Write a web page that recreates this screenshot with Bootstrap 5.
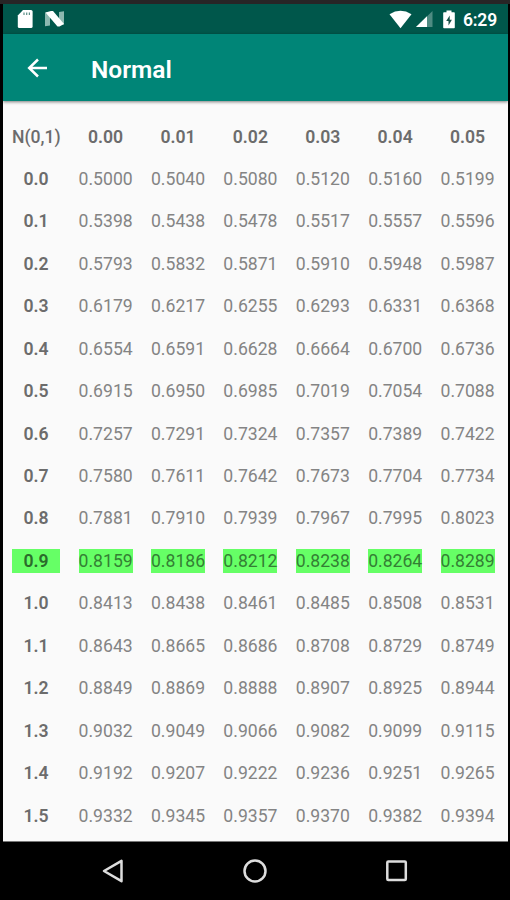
<!DOCTYPE html>
<html lang="en">
<head>
<meta charset="utf-8">
<meta name="viewport" content="width=device-width, initial-scale=1">
<title>Normal</title>
<link href="https://cdn.jsdelivr.net/npm/bootstrap@5.3.0/dist/css/bootstrap.min.css" rel="stylesheet">
<style>
html, body { height: 900px; overflow: hidden; }
body { background: #000; font-family: Roboto, "Liberation Sans", sans-serif; }
.device { width: 510px; height: 900px; border-top: 4px solid #272526; padding: 0 2px 0 3px; background: #000; }
.status-bar { height: 30px; background: #00574b; color: #fff; padding: 0 10px 0 14px; }
.clock { font-size: 17.5px; font-weight: 600; line-height: 30px; width: 35px; letter-spacing: -.2px; padding-top: 1px; }
.app-bar { height: 67px; background: #008577; color: #fff; position: relative; box-shadow: 0 1px 3px rgba(0,0,0,.5); padding-left: 21px; }
.app-title { font-size: 24.5px; font-weight: 600; line-height: 30px; margin: 4px 0 0 41px; }
.sheet { height: 741px; background: #fafafa; padding: 14.3px 0 0 9px; border-bottom: 1px solid #777; }
.z-row { height: 42.44px; color: #848484; font-size: 17.6px; line-height: 24px; }
.z-cell { width: 54px; height: 24px; margin-left: 18.4px; text-align: center; white-space: nowrap; }
.z-label { width: 48px; margin: 0 .2px 0 0; }
.z-head, .z-label { font-weight: 600; color: #6c6c6c; }
.z-head.z-label { font-weight: 500; }
.z-hit .z-cell { background: #66ff66; color: #347f34; }
.z-hit .z-label { color: #2b6c2b; }
.nav-keys { height: 58px; background: #000; padding-left: 98px; gap: 117px; }
.battery { margin: 0 8px 0 10px; }
svg { display: block; flex: none; }
</style>
</head>
<body>
<div class="device">
  <div class="status-bar d-flex align-items-center">
    <svg width="16" height="20" viewBox="0 0 16 20"><path d="M6 1h8a1.6 1.6 0 0 1 1.6 1.6v14.8A1.6 1.6 0 0 1 14 19H2.400A1.6 1.6 0 0 1 .8 17.400V6.500z" fill="#fff"/><path d="M7 3.500v2.500M9.700 3.500v2.500M12.400 3.500v2.500" stroke="#5b8f87" stroke-width="1.200"/></svg>
    <svg class="ms-2 me-auto" width="28" height="18" viewBox="0 0 28 18"><path d="M4 2.500h5v13l-5 .8zM18 2l5-.8V14.500h-5z" fill="#8cb8b0"/><path d="M4.500 2.500l5.500-1.500h2l11 13-4.500 2.600h-2z" fill="#fff"/></svg>
    <svg width="23" height="19" viewBox="0 0 23 19"><path d="M.5 4.200Q11.500-2.600 22.500 4.200L11.500 18.300z" fill="#fff"/></svg>
    <svg class="ms-1" style="margin-left:2px" width="17" height="18" viewBox="0 0 17 18"><path d="M16.500 1v16H0z" fill="#4e8b82"/><path d="M11 6.300V17H0z" fill="#fff"/></svg>
    <svg class="battery" width="12" height="19" viewBox="0 0 12 19"><path d="M3.500.5h5v1.700H11a.8.8 0 0 1 .8.8v14.500a.8.8 0 0 1-.8.8H1a.8.8 0 0 1-.8-.8V3a.8.8 0 0 1 .8-.8h2.500z" fill="#fff"/><path d="M6.700 5.500L3.200 11h2.300v4.500L8.900 9.700H6.700z" fill="#174f46"/></svg>
    <span class="clock">6:29</span>
  </div>
  <div class="app-bar d-flex align-items-center">
    <svg width="26" height="26" viewBox="0 0 26 26"><path d="M23 13H5.500M14 4.500L5.200 13l8.800 8.500" fill="none" stroke="#fff" stroke-width="2.500"/></svg>
    <h1 class="app-title">Normal</h1>
  </div>
  <main class="sheet"></main>
  <div class="nav-keys d-flex align-items-center">
    <svg width="24" height="26" viewBox="0 0 24 26"><path d="M20.500 2.800v20.400L3 13z" fill="none" stroke="#ddd" stroke-width="2.500" stroke-linejoin="round"/></svg>
    <svg width="26" height="26" viewBox="0 0 26 26"><circle cx="13" cy="13" r="10.500" fill="none" stroke="#ddd" stroke-width="2.500"/></svg>
    <svg width="24" height="26" viewBox="0 0 24 26"><rect x="2.300" y="3.500" width="18.500" height="18.500" rx="1" fill="none" stroke="#ddd" stroke-width="2.500"/></svg>
  </div>
</div>
<script src="https://cdn.jsdelivr.net/npm/bootstrap@5.3.0/dist/js/bootstrap.bundle.min.js"></script>
<script>
const rows = `N(0,1) 0.00 0.01 0.02 0.03 0.04 0.05
0.0 0.5000 0.5040 0.5080 0.5120 0.5160 0.5199
0.1 0.5398 0.5438 0.5478 0.5517 0.5557 0.5596
0.2 0.5793 0.5832 0.5871 0.5910 0.5948 0.5987
0.3 0.6179 0.6217 0.6255 0.6293 0.6331 0.6368
0.4 0.6554 0.6591 0.6628 0.6664 0.6700 0.6736
0.5 0.6915 0.6950 0.6985 0.7019 0.7054 0.7088
0.6 0.7257 0.7291 0.7324 0.7357 0.7389 0.7422
0.7 0.7580 0.7611 0.7642 0.7673 0.7704 0.7734
0.8 0.7881 0.7910 0.7939 0.7967 0.7995 0.8023
0.9 0.8159 0.8186 0.8212 0.8238 0.8264 0.8289
1.0 0.8413 0.8438 0.8461 0.8485 0.8508 0.8531
1.1 0.8643 0.8665 0.8686 0.8708 0.8729 0.8749
1.2 0.8849 0.8869 0.8888 0.8907 0.8925 0.8944
1.3 0.9032 0.9049 0.9066 0.9082 0.9099 0.9115
1.4 0.9192 0.9207 0.9222 0.9236 0.9251 0.9265
1.5 0.9332 0.9345 0.9357 0.9370 0.9382 0.9394`.split('\n');
document.querySelector('.sheet').innerHTML = rows.map((line, r) =>
  `<div class="z-row d-flex align-items-center${r === 10 ? ' z-hit' : ''}">` +
  line.split(' ').map((v, c) => `<div class="z-cell${c ? '' : ' z-label'}${r ? '' : ' z-head'}">${v}</div>`).join('') +
  '</div>').join('');
</script>
</body>
</html>
